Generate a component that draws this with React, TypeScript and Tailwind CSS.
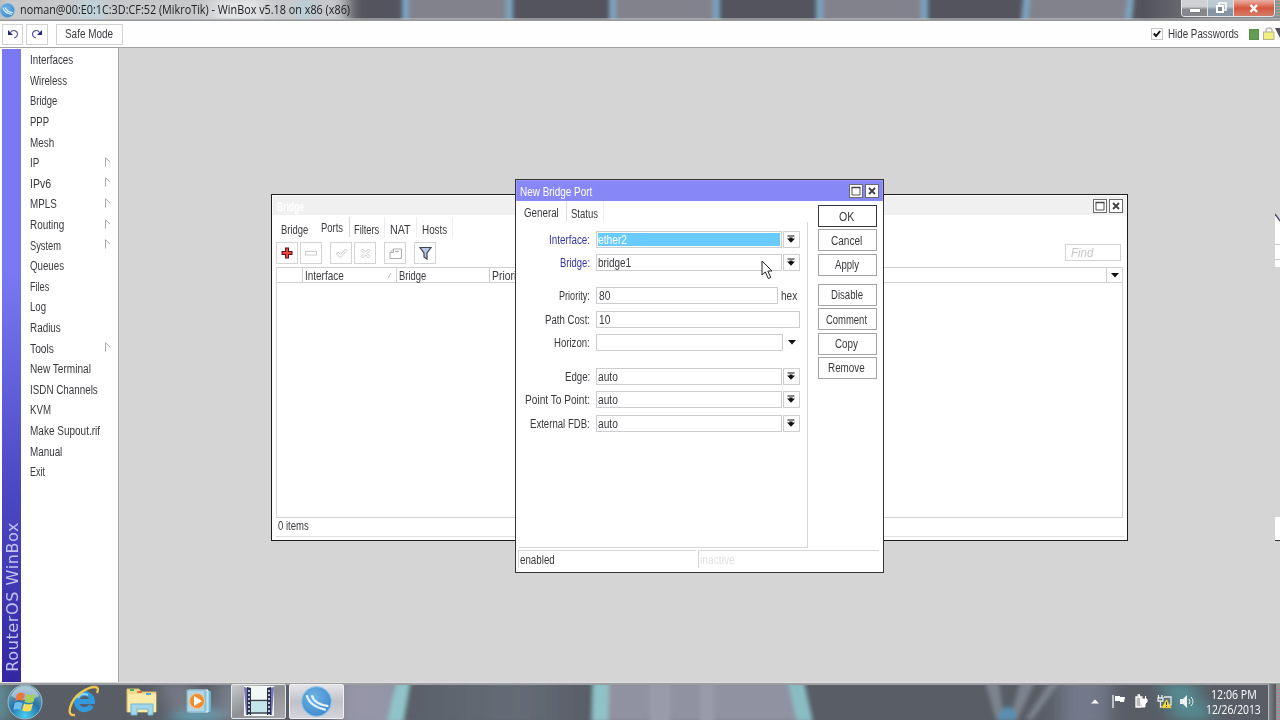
import { useLayoutEffect, useRef, useState } from "react";
import type { ReactNode } from "react";

// Condensed label: the text is squeezed horizontally so that it fills `w` pixels.
function T({ w, children, className = "" }: { w: number; children: string; className?: string }) {
  const ref = useRef<HTMLSpanElement>(null);
  const [scale, setScale] = useState(1);
  useLayoutEffect(() => {
    if (ref.current) setScale(w / ref.current.offsetWidth);
  }, [w]);
  return (
    <span className={"flex shrink-0 " + className} style={{ width: w }}>
      <span
        ref={ref}
        className="inline-block shrink-0 origin-left whitespace-nowrap"
        style={{ transform: `scaleX(${scale})` }}
      >
        {children}
      </span>
    </span>
  );
}

const menu: [string, number, boolean?][] = [
  ["Interfaces", 43.5],
  ["Wireless", 37],
  ["Bridge", 27.5],
  ["PPP", 19],
  ["Mesh", 24],
  ["IP", 9, true],
  ["IPv6", 21, true],
  ["MPLS", 27, true],
  ["Routing", 34, true],
  ["System", 31, true],
  ["Queues", 34],
  ["Files", 19],
  ["Log", 16],
  ["Radius", 30.5],
  ["Tools", 24, true],
  ["New Terminal", 60.5],
  ["ISDN Channels", 68],
  ["KVM", 21],
  ["Make Supout.rif", 70],
  ["Manual", 32],
  ["Exit", 15],
];

function TitleBackdrop() {
  const xs = [406, 510, 613, 717, 820, 925, 1027, 1131];
  return (
    <svg className="absolute inset-0" width="1280" height="21">
      <defs>
        <filter id="tb" x="-20%" width="140%"><feGaussianBlur stdDeviation="2.2 0" /></filter>
        <filter id="glow" x="-20%" y="-50%" width="140%" height="200%"><feGaussianBlur stdDeviation="8 3" /></filter>
        <linearGradient id="rt" x1="0" x2="1"><stop offset="0" stopColor="#50515a" /><stop offset=".5" stopColor="#7b7c80" /><stop offset="1" stopColor="#8a9298" /></linearGradient>
      </defs>
      <rect width="1280" height="21" fill="#53545d" />
      <g filter="url(#tb)">
        <rect x="406" width="104" height="21" fill="#82828c" />
        <rect x="613" width="104" height="21" fill="#82828c" />
        <rect x="820" width="105" height="21" fill="#82828c" />
        <rect x="1027" width="104" height="21" fill="#82828c" />
        {xs.map((x, i) => (
          <path key={x} d={`M${x - 4} 0h7l${i > 5 ? -2 : 0} 21h-7z`} fill="#7ba3bd" />
        ))}
      </g>
      <rect x="1142" width="138" height="21" fill="url(#rt)" />
      <g filter="url(#glow)">
        <rect x="-10" y="-6" width="358" height="34" fill="#c8c9cb" />
        <rect x="80" y="0" width="22" height="21" fill="#bdd5df" />
        <rect x="214" y="-2" width="50" height="25" fill="#e2e4e6" />
        <rect x="298" y="0" width="14" height="21" fill="#b5cfdb" />
      </g>
      <rect y="18.5" width="1280" height="1" fill="#c8c9c9" />
      <rect y="19.5" width="1280" height="1.5" fill="#969799" />
    </svg>
  );
}

function Orb({ size }: { size: number }) {
  return (
    <svg width={size} height={size} viewBox="0 0 30 30">
      <defs>
        <radialGradient id="orb" cx=".4" cy=".35" r=".75"><stop offset="0" stopColor="#6fb4e8" /><stop offset="1" stopColor="#3a86c6" /></radialGradient>
      </defs>
      <circle cx="15" cy="15" r="14.3" fill="url(#orb)" stroke="#8fc3ea" />
      <path d="M5.500 9q3 11 18.500 14M10.500 9q2 8.500 16 10.500" fill="none" stroke="#e3f2ff" strokeWidth="2.2" />
    </svg>
  );
}

function TitleBar() {
  return (
    <div className="relative flex h-[21px] shrink-0 items-start justify-between overflow-hidden">
      <TitleBackdrop />
      <div className="relative flex h-5 items-center gap-[5px]">
        <Orb size={15} />
        <T w={330} className="font-['Open_Sans',sans-serif] text-[12px] leading-5 text-[#202124]">
          noman@00:E0:1C:3D:CF:52 (MikroTik) - WinBox v5.18 on x86 (x86)
        </T>
      </div>
      <div className="relative mr-[5px] flex h-[17px]">
        <div className="flex h-[17px] overflow-hidden rounded-b-[4px] border border-t-0 border-[#e4e6e8]">
          <div className="flex w-[26px] items-center justify-center border-r border-[#dfe1e3] bg-gradient-to-b from-[#d0d1d4] from-40% to-[#85878c] to-60%">
            <div className="mt-1 h-[3px] w-[10px] bg-white shadow-[0_0_1px_#333]" />
          </div>
          <div className="flex w-[25px] items-center justify-center bg-gradient-to-b from-[#bccad3] from-40% to-[#8595a3] to-60%">
            <svg width="12" height="12" viewBox="0 0 12 12"><path d="M4 3V1h7v7H9" fill="none" stroke="#fff" strokeWidth="1.5" /><rect x="2" y="4" width="6" height="6" fill="#788590" stroke="#fff" strokeWidth="2" /></svg>
          </div>
          <div className="flex w-[41px] items-center justify-center border-l border-[#f0dcd8] bg-gradient-to-b from-[#e9b0a4] via-[#d6553c] to-[#d37c6a]">
            <svg width="10" height="9" viewBox="0 0 10 9" className="mr-px"><path d="M1.5 1l6.5 7M8 1L1.5 8" stroke="#fff" strokeWidth="2.5" /></svg>
          </div>
        </div>
      </div>
      <div className="absolute right-0 top-0 h-4 w-[4px] bg-[repeating-linear-gradient(0deg,#be9aa8_0_1px,#7e9c88_1px_3px)]" />
    </div>
  );
}

function Toolbar() {
  return (
    <div className="flex h-[27px] shrink-0 items-center border-b border-[#a2a2a2] bg-[#fefefe] pl-[2px]">
      <div className="flex h-[21px] w-[21px] items-center justify-center border border-[#d2d2d4]">
        <svg width="12" height="10" viewBox="0 0 12 10" fill="none"><path d="M3.5 3.5C5 .5 10 1 10.500 4.800C10.500 7 9 8.500 7 9" stroke="#55558c" strokeWidth="1.100" /><path d="M1 1v5h5z" fill="#272778" /></svg>
      </div>
      <div className="ml-[3px] flex h-[21px] w-[22px] items-center justify-center border border-[#d2d2d4]">
        <svg width="12" height="10" viewBox="0 0 12 10" fill="none"><path d="M8.500 3.500C7 .5 2 1 1.500 4.800C1.500 7 3 8.500 5 9" stroke="#55558c" strokeWidth="1.100" /><path d="M11 1v5H6z" fill="#272778" /></svg>
      </div>
      <div className="ml-2 flex h-[21px] w-[67px] items-center justify-center border border-[#d2d2d4] pb-px pr-[2px]"><T w={48}>Safe Mode</T></div>
      <div className="ml-auto flex h-[12px] w-[12px] items-center justify-center border border-[#c8c8c8]">
        <svg width="8" height="8" viewBox="0 0 8 8"><path d="M.8 3.500L3 6L7.200 1" fill="none" stroke="#111" strokeWidth="1.900" /></svg>
      </div>
      <T w={71} className="ml-[5px] pb-px">Hide Passwords</T>
      <div className="ml-[10px] h-[11px] w-[10px] border border-[#59914a] bg-[#629e51]" />
      <svg className="ml-[4px]" width="17" height="14" viewBox="0 0 17 14"><path d="M3 6V3.500Q3 1 6 1T9 3.500V6" fill="none" stroke="#bdbdae" strokeWidth="1.500" /><rect x=".5" y="5" width="10.500" height="7.500" fill="#f1ee83" stroke="#b5b38a" /><path d="M12 1h5v10z" fill="#585159" /></svg>
    </div>
  );
}

function Sidebar() {
  return (
    <div className="flex w-[119px] shrink-0 border-r border-[#a8a8aa] bg-white pl-[2px] pt-px">
      <div className="flex w-[18.5px] shrink-0 items-end justify-center bg-gradient-to-b from-[#7a79f3] from-35% via-[#4c47c2] via-70% to-[#3327a3]">
        <span className="mb-[10px] mr-[-3px] rotate-180 whitespace-nowrap font-['DejaVu_Sans',sans-serif] text-[16px] leading-[18px] tracking-[0.6px] text-[#c5c3ef] [writing-mode:vertical-rl]">RouterOS WinBox</span>
      </div>
      <ul className="ml-[9px] flex grow flex-col pt-px">
        {menu.map(([label, w, sub]) => (
          <li key={label} className="flex h-[20.6px] items-center justify-between pr-[7px]">
            <T w={w}>{label}</T>
            {sub && <svg className="-mt-[3px]" width="6" height="10" viewBox="0 0 6 10"><path d="M.5 9.500V.8L5 5" fill="none" stroke="#a9a9a9" /></svg>}
          </li>
        ))}
      </ul>
    </div>
  );
}

function WinButtons({ className = "" }: { className?: string }) {
  return (
    <div className={"flex gap-[2px] " + className}>
      <div className="flex h-[14px] w-[14px] items-center justify-center border border-[#6c6c70] bg-white">
        <svg width="10" height="10" viewBox="0 0 10 10"><path d="M1 1.500h8v7.500H1z" fill="#fff" stroke="#555" /><path d="M.5 1.500h9" stroke="#444" strokeWidth="1.500" /></svg>
      </div>
      <div className="flex h-[14px] w-[14px] items-center justify-center border border-[#6c6c70] bg-white">
        <svg width="8" height="8" viewBox="0 0 8 8"><path d="M1 1l6 6M7 1L1 7" stroke="#444" strokeWidth="1.900" /></svg>
      </div>
    </div>
  );
}

function ToolButton({ children, className = "" }: { children: ReactNode; className?: string }) {
  return <div className={"flex h-[22px] w-[22px] items-center justify-center border border-[#d4d4d6] " + className}>{children}</div>;
}

function BridgeWindow() {
  return (
    <div className="absolute left-[271px] top-[146px] flex h-[347px] w-[857px] flex-col border border-[#1c1c1c] bg-white">
      <div className="mx-px mt-px flex h-[19px] shrink-0 items-center justify-between bg-[#f0f0f0] pl-[4px] pr-[3px]">
        <T w={27} className="mt-[2px] font-bold text-white">Bridge</T>
        <WinButtons />
      </div>
      <div className="flex h-[27px] shrink-0 items-start pl-[9px] pt-[2px]">
        <div className="flex h-5 w-[69px] items-center border-r border-[#d5d5d5]">
          <T w={27.500} className="pt-[5px]">Bridge</T>
          <T w={22} className="ml-3 pt-px">Ports</T>
        </div>
        <div className="flex h-5 w-[35px] items-center border-r border-[#eee] pl-[4px] pt-[5px]"><T w={25.500}>Filters</T></div>
        <div className="flex h-5 w-8 items-center border-r border-[#eee] pl-[5px] pt-[5px]"><T w={20.500}>NAT</T></div>
        <div className="flex h-5 w-9 items-center border-r border-[#eee] pl-[5px] pt-[5px]"><T w={25.500}>Hosts</T></div>
      </div>
      <div className="flex h-[25px] shrink-0 items-start pl-[4px]">
        <ToolButton><svg width="12" height="12" viewBox="0 0 12 12"><path d="M4 .5h4V4h3.500v4H8v3.500H4V8H.5V4H4z" fill="#54181a" /><path d="M5 1.500h2V5h3.500v2H7v3.500H5V7H1.500V5H5z" fill="#ef4343" /></svg></ToolButton>
        <ToolButton className="ml-[2px]"><svg width="12" height="5" viewBox="0 0 12 5"><rect x=".5" y=".5" width="11" height="3.500" fill="#fff" stroke="#ccc" /></svg></ToolButton>
        <ToolButton className="ml-2"><svg width="13" height="11" viewBox="0 0 13 11"><path d="M1 6l2-2 2.500 2.500L10.500 1 12 2.500 5.500 9.500z" fill="#fff" stroke="#ccc" /></svg></ToolButton>
        <ToolButton className="ml-[2px]"><svg width="11" height="11" viewBox="0 0 11 11"><path d="M1 2.500L2.500 1l3 3 3-3L10 2.500l-3 3 3 3L8.500 10l-3-3-3 3L1 8.500l3-3z" fill="#fff" stroke="#ccc" /></svg></ToolButton>
        <ToolButton className="ml-2"><svg width="13" height="11" viewBox="0 0 13 11"><path d="M4.500 1h8v9.500H1V4.500zM4.500 1v3.500H1M6 3.500h4" fill="#fff" stroke="#aaa" /></svg></ToolButton>
        <ToolButton className="ml-2"><svg width="13" height="14" viewBox="0 0 13 14"><path d="M1 1.500h11L8 7v6L5 11V7z" fill="#b9c3e5" stroke="#414653" strokeWidth="1.200" /></svg></ToolButton>
        <div className="mt-[2px] ml-auto mr-[6px] flex h-[17px] w-[56px] items-center border border-[#d4d4d6] pl-[5px] text-[#c7c7c7]"><T w={22} className="italic">Find</T></div>
      </div>
      <div className="ml-[4px] mr-[4px] flex h-[251px] shrink-0 flex-col border border-t-0 border-[#d5d5d7]">
        <div className="flex h-4 shrink-0 border-y border-[#d0d0d2]">
          <div className="w-[26px] border-r border-[#d0d0d2]" />
          <div className="flex w-[94px] items-center border-r border-[#d0d0d2] pl-[2px] pt-px"><T w={39}>Interface</T><svg className="ml-[43px]" width="5" height="7" viewBox="0 0 5 7"><path d="M1 6L4 1" stroke="#bbb" /></svg></div>
          <div className="flex w-[93px] items-center border-r border-[#d0d0d2] pl-[2px] pt-px"><T w={27.500}>Bridge</T></div>
          <div className="flex w-[93px] items-center pl-[2px] pt-px"><T w={59}>Priority (hex)</T></div>
          <div className="ml-auto flex w-4 items-center justify-center border-l border-[#d0d0d2]"><svg width="8" height="5" viewBox="0 0 8 5"><path d="M0 0h8L4 4.500z" fill="#111" /></svg></div>
        </div>
      </div>
      <div className="ml-[4px] mr-[3px] flex h-[19px] items-center border-b border-[#dedede] pb-[2px] pl-[2px]"><T w={31}>0 items</T></div>
    </div>
  );
}

function DropButton() {
  return (
    <div className="ml-px flex h-[17px] w-[17px] items-center justify-center border border-[#cfcfd1] pb-px pr-[2px]">
      <svg width="8" height="8" viewBox="0 0 8 8"><path d="M.5.500h7v1h-7zM2.500 2.500h3V3.500h2.500L4 7.800 0 3.500h2.500z" fill="#111" /></svg>
    </div>
  );
}

type Row = { label: string; lw: number; value: string; vw: number; kind: "drop" | "hex" | "full" | "open"; gap: string; blue?: boolean; picked?: boolean };

const rows: Row[] = [
  { label: "Interface:", lw: 41, value: "ether2", vw: 29, kind: "drop", gap: "mt-0", blue: true, picked: true },
  { label: "Bridge:", lw: 30, value: "bridge1", vw: 33, kind: "drop", gap: "mt-[6.3px]", blue: true },
  { label: "Priority:", lw: 31, value: "80", vw: 11, kind: "hex", gap: "mt-[16px]" },
  { label: "Path Cost:", lw: 45, value: "10", vw: 11, kind: "full", gap: "mt-[6.3px]" },
  { label: "Horizon:", lw: 36, value: "", vw: 1, kind: "open", gap: "mt-[6.4px]" },
  { label: "Edge:", lw: 25, value: "auto", vw: 19.5, kind: "drop", gap: "mt-[17px]" },
  { label: "Point To Point:", lw: 65, value: "auto", vw: 19.5, kind: "drop", gap: "mt-[6.4px]" },
  { label: "External FDB:", lw: 60, value: "auto", vw: 19.5, kind: "drop", gap: "mt-[6.4px]" },
];

const fieldWidth = { drop: "w-[186px]", hex: "w-[182px]", full: "w-[204px]", open: "w-[187px]" };

function FormRow({ r }: { r: Row }) {
  return (
    <div className={"flex h-[17px] shrink-0 items-center " + r.gap}>
      <div className="flex w-[71px] justify-end pt-px"><T w={r.lw} className={r.blue ? "text-[#3535a6]" : ""}>{r.label}</T></div>
      <div className={"ml-[6px] flex h-[17px] items-center border border-[#cdcdcf] p-px " + fieldWidth[r.kind]}>
        <div className={"flex h-full grow items-center pt-px " + (r.picked ? "bg-[#69cbfb] text-white" : r.kind === "drop" ? "" : "pl-px")}>
          {r.value && <T w={r.vw}>{r.value}</T>}
        </div>
      </div>
      {r.kind === "drop" && <DropButton />}
      {r.kind === "hex" && <T w={16} className="ml-[3px] pt-px">hex</T>}
      {r.kind === "open" && <svg className="ml-[5px]" width="8" height="5" viewBox="0 0 8 5"><path d="M0 0h8L4 4.500z" fill="#111" /></svg>}
    </div>
  );
}

const actions: [string, number, string][] = [
  ["OK", 15, "mt-0 border-[#38383c]"],
  ["Cancel", 31, "mt-[2.4px] border-[#a5a5a9]"],
  ["Apply", 24, "mt-[2.4px] border-[#a5a5a9]"],
  ["Disable", 32, "mt-[8px] border-[#a5a5a9]"],
  ["Comment", 41, "mt-[2.4px] border-[#a5a5a9]"],
  ["Copy", 23, "mt-[2.4px] border-[#a5a5a9]"],
  ["Remove", 37, "mt-[2.4px] border-[#a5a5a9]"],
];

function PortDialog() {
  return (
    <div className="absolute left-[515px] top-[131px] flex h-[394px] w-[369px] flex-col border border-[#333338] bg-white">
      <div className="flex h-[21px] shrink-0 items-center justify-between border border-b-0 border-[#a09cf6] bg-[#8887f8] pl-[3px] pr-[3px]">
        <T w={72} className="mt-px text-white">New Bridge Port</T>
        <WinButtons />
      </div>
      <div className="flex h-[347px] shrink-0">
        <div className="ml-[3px] flex w-[289px] flex-col">
          <div className="flex h-[21px] shrink-0 items-start">
            <div className="flex h-5 w-[48px] items-center border-r border-[#dcdcdc] pl-[5px] pt-[3px]"><T w={35}>General</T></div>
            <div className="flex h-5 w-[37px] items-center border-r border-[#eee] pl-[4px] pt-[6px]"><T w={27}>Status</T></div>
          </div>
          <div className="flex grow flex-col border-b border-r border-[#d6d6d8] pt-[9px]">
            {rows.map((r) => <FormRow key={r.label} r={r} />)}
          </div>
        </div>
        <div className="ml-[10px] flex w-[59px] flex-col pt-[4px]">
          {actions.map(([label, w, cls]) => (
            <div key={label} className={"flex h-[22px] items-center justify-center border pr-[2px] pt-px " + cls}><T w={w}>{label}</T></div>
          ))}
        </div>
      </div>
      <div className="ml-[2px] mr-[4px] mt-[2px] flex h-[18px]">
        <div className="flex w-[178px] items-center border-l border-t border-[#d6d6d8] pl-px"><T w={35}>enabled</T></div>
        <div className="ml-[2px] flex grow items-center border-l border-t border-[#d6d6d8] pl-px text-[#e3e3e3]"><T w={35}>inactive</T></div>
      </div>
    </div>
  );
}

function TaskBackdrop() {
  return (
    <svg className="absolute inset-0" width="1280" height="38">
      <defs>
        <filter id="b1" x="-20%" y="-20%" width="140%" height="140%"><feGaussianBlur stdDeviation="2" /></filter>
        <filter id="b2" x="-30%" y="-30%" width="160%" height="160%"><feGaussianBlur stdDeviation="9 5" /></filter>
        <linearGradient id="d1"><stop offset="0" stopColor="#595f68" /><stop offset=".6" stopColor="#656c76" /><stop offset="1" stopColor="#565d67" /></linearGradient>
      </defs>
      <rect width="1280" height="38" fill="#585d66" />
      <g filter="url(#b2)">
        <rect x="-14" y="0" width="22" height="40" fill="#5f949d" />
        <path d="M158 0h32l30 38h-48z" fill="#747985" />
        <path d="M185 28h40v12h-60z" fill="#619fb2" />
        <rect x="218" y="0" width="24" height="40" fill="#7c8490" />
        <rect x="335" y="-4" width="70" height="50" fill="#9596a8" />
        <rect x="1060" y="-4" width="50" height="50" fill="#73798a" />
        <path d="M1160 0h32l22 38h-40z" fill="#548a90" />
      </g>
      <g filter="url(#b1)">
        <path d="M405 0H598V40H396z" fill="url(#d1)" />
        <path d="M605 0H792L804 40H602z" fill="#9092a2" />
        <path d="M650-4h20v50h-20zM700-4h14v50h-14z" fill="#999baa" />
        <path d="M396 0H410L403 40H387z" fill="#90c4c8" />
        <path d="M593 0H609L608 40H592z" fill="#8fc3c7" />
        <path d="M788 0H804L813 40H797z" fill="#8abdc2" />
        <path d="M985 0h14l5 38h-8zM1020 0l-10 38h7L1035 0zM1050 0l-25 38h7L1060 0z" fill="#7d838d" />
        <path d="M1000 29q8-8 16 0v10h-18z" fill="#5c8eb0" />
      </g>
      <rect width="1280" height="1" fill="#dfdfdf" />
      <rect y="1" width="1280" height="2" fill="#9c9ea1" />
    </svg>
  );
}

function Taskbar() {
  return (
    <div className="relative flex h-[38px] shrink-0 items-center overflow-hidden">
      <TaskBackdrop />
      <svg className="relative ml-[7px] mt-px" width="36" height="36" viewBox="0 0 36 36">
        <defs><radialGradient id="st" cx=".5" cy=".9" r=".9"><stop offset="0" stopColor="#48cdf0" /><stop offset=".5" stopColor="#2675aa" /><stop offset="1" stopColor="#88afc1" /></radialGradient></defs>
        <circle cx="18" cy="18" r="17" fill="url(#st)" stroke="#9abac6" />
        <path d="M4 12C9-1 27-1 32 12Q18 20 4 12" fill="#d8e6eb" opacity=".55" />
        <path d="M10 10q4-3 8 0l-2 7q-4-2-8 0z" fill="#ee7640" /><path d="M19.500 10q4 2 9 0l-2 8q-4 2-9 0z" fill="#a6d05a" /><path d="M7.500 19q4-2 8 0l-2 7q-4-2-7 0z" fill="#71bdf0" /><path d="M17 19.500q4 2 9 0l-2 7q-4 2-9 0z" fill="#ffdc55" />
      </svg>
      <svg className="relative ml-[24px]" width="34" height="34" viewBox="0 0 34 34">
        <path d="M24.500 21.500A8 8 0 1 1 25.500 17.500H12" fill="none" stroke="#3299dd" strokeWidth="5" />
        <path d="M11 14q3-6 10-3" fill="none" stroke="#8dd8fa" strokeWidth="2" />
        <path d="M8 31C-2 33 3 16 14 8.500C25 1 34 1 30 9" fill="none" stroke="#edc64b" strokeWidth="2.400" />
      </svg>
      <svg className="relative ml-[25px]" width="32" height="30" viewBox="0 0 32 30">
        <path d="M1 3h12l2 3h15v20H1z" fill="#f1dc8b" stroke="#d5bf71" /><path d="M2 8h28v18H2z" fill="#f8eaa8" />
        <path d="M4 3h4v2H4z" fill="#56a957" /><path d="M11 5h5v2h-5z" fill="#d97545" /><path d="M20 7h5v2h-5z" fill="#5ba4d2" />
        <path d="M5 29V18h22v11h-5v-6H11v6z" fill="#a3d7ea" stroke="#71b5cf" />
      </svg>
      <svg className="relative ml-[28px]" width="26" height="25" viewBox="0 0 26 25">
        <path d="M5 2h20v21H5z" fill="#6db2cf" /><path d="M3 1h19v22H3z" fill="#9bd4e5" stroke="#e4f7fb" /><path d="M1 1h18v22H1z" fill="#b2d7e3" stroke="#78b0c6" />
        <circle cx="11" cy="12" r="7.500" fill="#ed8d34" stroke="#f4c393" /><path d="M8 7l8 5-8 5z" fill="#fff" />
      </svg>
      <div className="relative ml-[19px] flex h-[35px] w-[55px] shrink-0 items-center justify-center rounded-[2px] border border-[#e7e8ea] bg-gradient-to-br from-[#c9cacc] via-[#8d8f92] to-[#a9abb0]">
        <svg width="30" height="30" viewBox="0 0 30 30"><path d="M0 0h30v30H0z" fill="#f2f8f6" /><path d="M0 1l4 1v27H2zM30 1l-4 1v27h2z" fill="#7472bb" /><path d="M3 1l4 1v27H3zM27 1l-4 1v27h4z" fill="#2b304b" /><path d="M5 4v25M25 4v25" stroke="#e3eef3" strokeWidth="1.600" strokeDasharray="2 2" /><path d="M7 16h16v10H7z" fill="#c4e6e8" /><path d="M7 14.500h16M7 27h16" stroke="#39414b" strokeWidth="1.500" /></svg>
      </div>
      <div className="relative ml-[3px] flex h-[35px] w-[55px] shrink-0 items-center justify-center rounded-[2px] border border-[#f2f2f4] bg-gradient-to-b from-[#e4e4e8] via-[#c1c1ca] to-[#d4d4db]"><Orb size={31} /></div>
      <div className="relative ml-auto mr-[19px] flex items-center">
        <svg width="8" height="5" viewBox="0 0 8 5"><path d="M0 4.500h8L4 .5z" fill="#fff" /></svg>
        <svg className="ml-[13px]" width="14" height="15" viewBox="0 0 14 15"><path d="M1 1v13" stroke="#fff" strokeWidth="1.200" /><path d="M3 2h5v1h5l-1 5H8V7H3z" fill="#fff" /></svg>
        <svg className="ml-[8px]" width="14" height="15" viewBox="0 0 14 15"><path d="M2 3h5v10H2zM3.500 1h2v2" fill="#b9bbbd" stroke="#fff" strokeWidth="1.300" /><path d="M8 2v3M11.500 2v3M6.500 5H13v3l-2 2v3H8v-3L6.500 8z" fill="#fff" stroke="#fff" /></svg>
        <svg className="ml-[9px]" width="15" height="15" viewBox="0 0 15 15"><path d="M1.500 1v3M5 1v3M1 4h5v3H1zM3.500 7v6H7M7 3h7v8H8" fill="none" stroke="#e9eaea" strokeWidth="1.300" /><path d="M9.500 5l5 9h-10z" fill="#f5de40" stroke="#ad983c" strokeWidth=".5" /><path d="M9.500 8v3m0 1v1" stroke="#353116" /></svg>
        <svg className="ml-[8px]" width="14" height="13" viewBox="0 0 14 13"><path d="M0 4h3l4-4v13L3 9H0z" fill="#eef0f1" /><path d="M9 4q2 2.500 0 5M11 2q4 4.500 0 9" fill="none" stroke="#eee" /></svg>
        <div className="ml-[12px] mt-px flex flex-col items-center font-['Open_Sans',sans-serif] text-[12px] leading-[15px] text-white">
          <T w={46}>12:06 PM</T>
          <T w={55}>12/26/2013</T>
        </div>
      </div>
      <div className="absolute right-[4px] top-[2px] h-9 w-[8px] border-l border-[#b6b6ba] bg-gradient-to-r from-[#80858d] to-[#55575d]" />
      <div className="absolute right-0 top-[2px] h-9 w-[4px] bg-[repeating-linear-gradient(0deg,#ac8293_0_1px,#909a95_1px_3px)]" />
    </div>
  );
}

export default function App() {
  return (
    <div className="flex h-[720px] w-[1280px] flex-col overflow-hidden bg-[#d5d5d5] font-['Liberation_Sans',sans-serif] text-[12px] leading-[14px] text-[#3a3a3e]">
      <TitleBar />
      <Toolbar />
      <div className="relative flex h-[634px] shrink-0 overflow-hidden">
        <Sidebar />
        <div className="grow bg-[#d5d5d5]" />
        <BridgeWindow />
        <PortDialog />
        <div className="absolute right-0 top-[166px] h-[53px] w-[5px] bg-white [clip-path:polygon(0_0,100%_14%,100%_100%,0_100%)]">
          <div className="mt-[30px] h-4 border-y border-[#ccc]" />
        </div>
        <svg className="absolute right-0 top-[165px]" width="5" height="9" viewBox="0 0 5 9"><path d="M0 1l5 7" stroke="#4c4d63" strokeWidth="1.400" /></svg>
        <div className="absolute right-0 top-[469px] h-[24px] w-[5px] border-b border-[#333] bg-white" />
        <svg className="absolute left-[761px] top-[212px]" width="13" height="20" viewBox="0 0 13 20"><path d="M1 1v14l3.300-3 3 6.500 2.500-1-3-6.500H11z" fill="#fff" stroke="#222" /></svg>
      </div>
      <Taskbar />
    </div>
  );
}
